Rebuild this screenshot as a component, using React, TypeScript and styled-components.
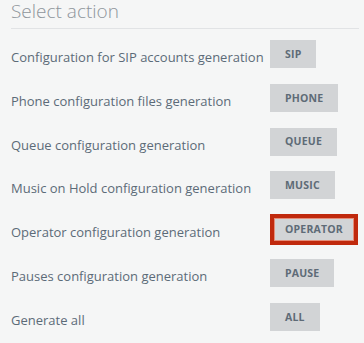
import React from "react";
import styled, { createGlobalStyle } from "styled-components";

const Global = createGlobalStyle`
  html, body {
    margin: 0;
    padding: 0;
    background: #f5f6f6;
  }
  body {
    font-family: "Open Sans", "Liberation Sans", sans-serif;
  }
`;

const Panel = styled.div`
  width: 364px;
  height: 343px;
  box-sizing: border-box;
  padding: 0 5px 0 11px;
  background: #f5f6f6;
  overflow: hidden;
`;

const Title = styled.h2`
  margin: 0;
  font-size: 19px;
  line-height: 22px;
  font-weight: 300;
  color: #8e959b;
  padding-bottom: 6px;
  border-bottom: 1px solid #e1e3e5;
`;

const List = styled.div`
  display: grid;
  grid-template-columns: 259px auto;
  grid-auto-rows: 28px;
  row-gap: 15.8px;
  padding-top: 11px;
`;

const Label = styled.div`
  padding-top: 8px;
  font-size: 13px;
  line-height: 18px;
  color: #5c6b78;
  white-space: nowrap;
`;

const Cell = styled.div`
  display: flex;
  align-items: flex-start;
`;

const ActionButton = styled.button<{ $active?: boolean }>`
  font-family: "Open Sans", "Liberation Sans", sans-serif;
  font-weight: 700;
  font-size: 10.5px;
  letter-spacing: 0.2px;
  color: #5e6b77;
  background: #d2d4d6;
  border: ${(p) => (p.$active ? "4px solid #c0290d" : "none")};
  box-shadow: ${(p) => (p.$active ? "inset 0 0 0 1px #e48d79" : "none")};
  height: ${(p) => (p.$active ? "31px" : "28px")};
  margin-top: ${(p) => (p.$active ? "-1px" : "0")};
  padding: ${(p) => (p.$active ? "0 11px" : "0 15px")};
  box-sizing: border-box;
  line-height: 1;
  cursor: pointer;
  text-transform: uppercase;
`;

const rows: { label: string; action: string; active?: boolean }[] = [
  { label: "Configuration for SIP accounts generation", action: "SIP" },
  { label: "Phone configuration files generation", action: "PHONE" },
  { label: "Queue configuration generation", action: "QUEUE" },
  { label: "Music on Hold configuration generation", action: "MUSIC" },
  { label: "Operator configuration generation", action: "OPERATOR", active: true },
  { label: "Pauses configuration generation", action: "PAUSE" },
  { label: "Generate all", action: "ALL" },
];

export default function App() {
  return (
    <>
      <Global />
      <Panel>
        <Title>Select action</Title>
        <List>
          {rows.map((r) => (
            <React.Fragment key={r.action}>
              <Label>{r.label}</Label>
              <Cell>
                <ActionButton $active={r.active}>{r.action}</ActionButton>
              </Cell>
            </React.Fragment>
          ))}
        </List>
      </Panel>
    </>
  );
}
